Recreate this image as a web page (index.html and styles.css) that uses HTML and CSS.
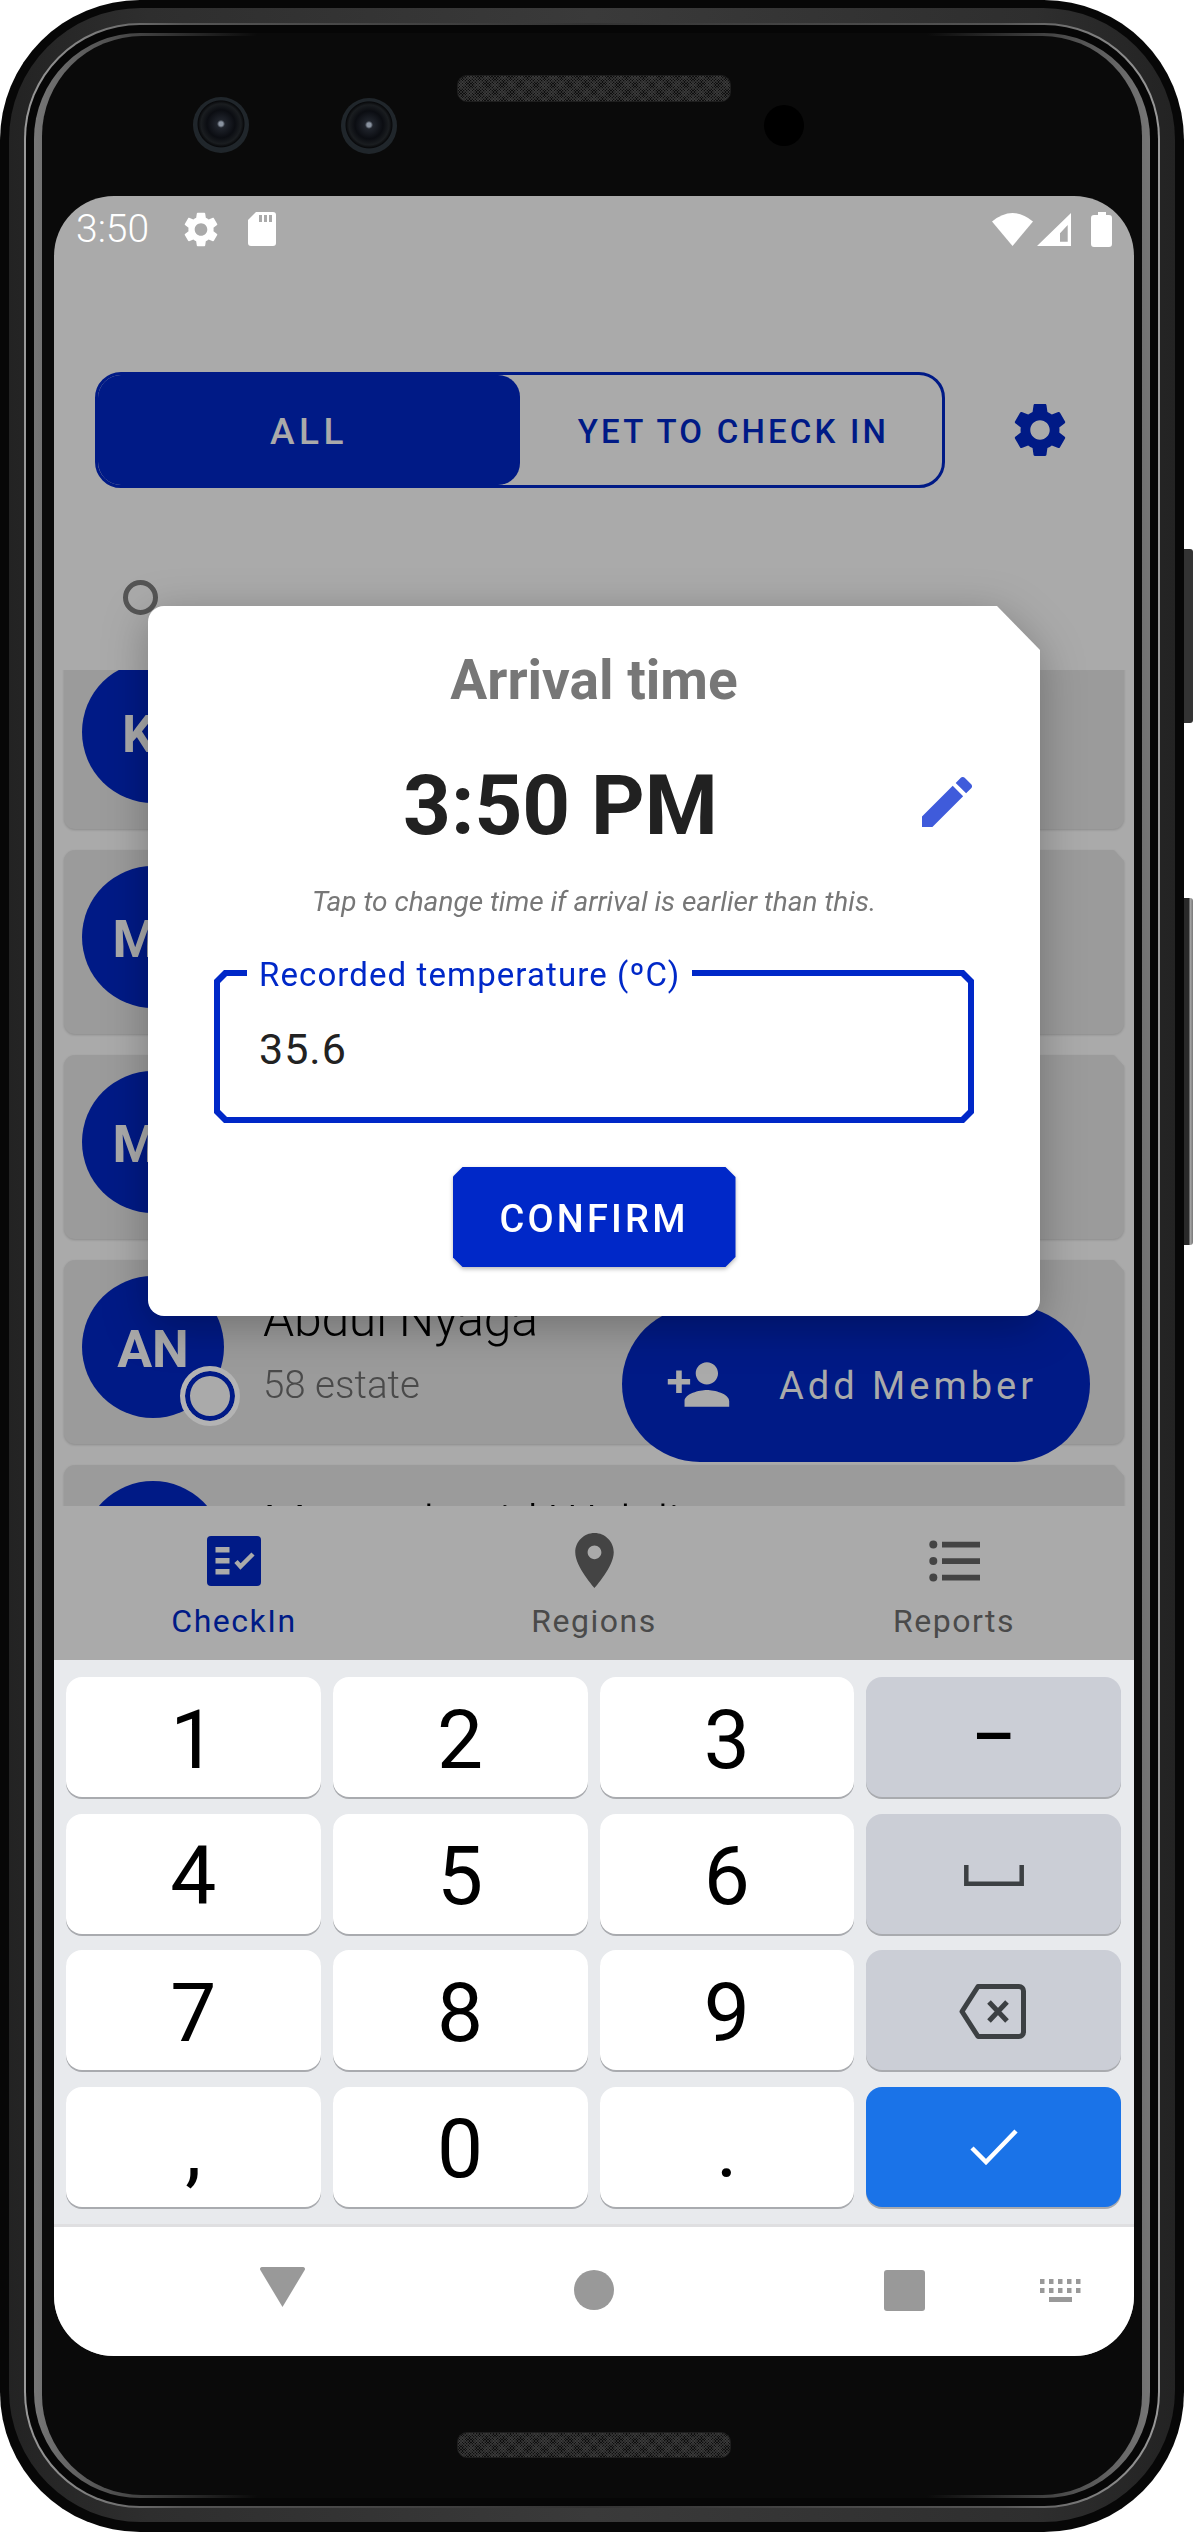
FILE: index.html
```html
<!DOCTYPE html>
<html lang="en">
<head>
<meta charset="utf-8">
<title>CheckIn</title>
<link rel="stylesheet" href="styles.css">
</head>
<body>
<div class="phone">
  <span class="side-key side-key-power"></span>
  <span class="side-key side-key-volume"></span>
  <div class="band">
    <div class="edge">
      <div class="gutter">
        <div class="ring">
          <div class="face">
            <div class="sensors">
              <span class="camera camera-a"></span>
              <span class="camera camera-b"></span>
              <span class="speaker speaker-top"></span>
              <span class="proximity"></span>
            </div>
            <div class="screen">
              <div class="status-bar">
                <span class="clock">3:50</span>
                <svg class="st-gear" viewBox="2.5 2 19 20"><path d="M19.14 12.94c.04-.3.06-.61.06-.94 0-.32-.02-.64-.07-.94l2.03-1.58c.18-.14.23-.41.12-.61l-1.92-3.32c-.12-.22-.37-.29-.59-.22l-2.39.96c-.5-.38-1.03-.7-1.62-.94l-.36-2.54c-.04-.24-.24-.41-.48-.41h-3.84c-.24 0-.43.17-.47.41l-.36 2.54c-.59.24-1.13.57-1.62.94l-2.39-.96c-.22-.08-.47 0-.59.22L2.74 8.87c-.12.21-.08.47.12.61l2.03 1.58c-.05.3-.09.63-.09.94s.02.64.07.94l-2.03 1.58c-.18.14-.23.41-.12.61l1.92 3.32c.12.22.37.29.59.22l2.39-.96c.5.38 1.03.7 1.62.94l.36 2.54c.05.24.24.41.48.41h3.84c.24 0 .44-.17.47-.41l.36-2.54c.59-.24 1.13-.56 1.62-.94l2.39.96c.22.08.47 0 .59-.22l1.92-3.32c.12-.22.07-.47-.12-.61l-2.01-1.58zM12 15.6c-1.98 0-3.6-1.62-3.6-3.6s1.62-3.6 3.6-3.6 3.6 1.62 3.6 3.6-1.62 3.6-3.6 3.6z"/></svg>
                <svg class="st-sd" viewBox="0 0 28 34"><path d="M8 0H25a3 3 0 0 1 3 3V31a3 3 0 0 1-3 3H3a3 3 0 0 1-3-3V8Z"/><path class="st-slot" d="M11 3h3v7h-3zM16 3h3v7h-3zM21 3h3v7h-3z"/></svg>
                <span class="status-spacer"></span>
                <svg class="st-wifi" viewBox="0 0 41 33"><path d="M20.5 33 0 8.5Q20.5-8.5 41 8.5Z"/></svg>
                <svg class="st-signal" viewBox="0 0 34 33"><path fill-rule="evenodd" d="M34 0 0 33H34ZM30.7 12 23 20.3V28.7H30.7Z"/></svg>
                <svg class="st-battery" viewBox="0 0 21 35"><path d="M7 0h8v3h3a3 3 0 0 1 3 3V32a3 3 0 0 1-3 3H3a3 3 0 0 1-3-3V6a3 3 0 0 1 3-3h4Z"/></svg>
              </div>

              <div class="filter-row">
                <div class="toggle">
                  <div class="toggle-on">ALL</div>
                  <div class="toggle-off">YET TO CHECK IN</div>
                </div>
                <svg class="filter-gear" viewBox="2.5 2 19 20"><path d="M19.14 12.94c.04-.3.06-.61.06-.94 0-.32-.02-.64-.07-.94l2.03-1.58c.18-.14.23-.41.12-.61l-1.92-3.32c-.12-.22-.37-.29-.59-.22l-2.39.96c-.5-.38-1.03-.7-1.62-.94l-.36-2.54c-.04-.24-.24-.41-.48-.41h-3.84c-.24 0-.43.17-.47.41l-.36 2.54c-.59.24-1.13.57-1.62.94l-2.39-.96c-.22-.08-.47 0-.59.22L2.74 8.87c-.12.21-.08.47.12.61l2.03 1.58c-.05.3-.09.63-.09.94s.02.64.07.94l-2.03 1.58c-.18.14-.23.41-.12.61l1.92 3.32c.12.22.37.29.59.22l2.39-.96c.5.38 1.03.7 1.62.94l.36 2.54c.05.24.24.41.48.41h3.84c.24 0 .44-.17.47-.41l.36-2.54c.59-.24 1.13-.56 1.62-.94l2.39.96c.22.08.47 0 .59-.22l1.92-3.32c.12-.22.07-.47-.12-.61l-2.01-1.58zM12 15.6c-1.98 0-3.6-1.62-3.6-3.6s1.62-3.6 3.6-3.6 3.6 1.62 3.6 3.6-1.62 3.6-3.6 3.6z"/></svg>
              </div>

              <span class="scroll-ring"></span>

              <div class="list">
                <div class="card card-first"><div class="card-body">
                  <div class="avatar">KJ</div>
                  <div class="person"><div class="person-name">Kamau Juma</div><div class="person-place">12 estate</div></div>
                </div></div>
                <div class="card"><div class="card-body">
                  <div class="avatar">MA</div>
                  <div class="person"><div class="person-name">Mary Achieng</div><div class="person-place">31 estate</div></div>
                </div></div>
                <div class="card"><div class="card-body">
                  <div class="avatar">MA</div>
                  <div class="person"><div class="person-name">Musa Ali</div><div class="person-place">44 estate</div></div>
                </div></div>
                <div class="card"><div class="card-body">
                  <div class="avatar">AN<span class="avatar-badge"></span></div>
                  <div class="person"><div class="person-name">Abdul Nyaga</div><div class="person-place">58 estate</div></div>
                </div></div>
                <div class="card"><div class="card-body">
                  <div class="avatar">MW</div>
                  <div class="person"><div class="person-name">Mwanakasid Walali</div><div class="person-place">60 estate</div></div>
                </div></div>
              </div>

              <div class="tabs">
                <div class="tab tab-active">
                  <span class="tab-icon">
                    <svg class="ic-check" viewBox="0 0 54 50"><rect width="54" height="50" rx="4" fill="#001a86"/><path fill="#aaa" d="M8.5 11h14v5.500h-14zM8.500 22h14v5.500h-14zM8.500 33h14v5.500h-14z"/><path fill="none" stroke="#aaa" stroke-width="4.500" d="M29 25.500l4.500 5L46 18"/></svg>
                  </span>
                  <span class="tab-label">CheckIn</span>
                </div>
                <div class="tab">
                  <span class="tab-icon">
                    <svg class="ic-place" viewBox="5 2 14 20"><path d="M12 2C8.130 2 5 5.130 5 9c0 5.250 7 13 7 13s7-7.750 7-13c0-3.870-3.130-7-7-7zm0 9.500c-1.380 0-2.500-1.120-2.500-2.500s1.120-2.500 2.500-2.500 2.500 1.120 2.500 2.500-1.120 2.500-2.500 2.500z"/></svg>
                  </span>
                  <span class="tab-label">Regions</span>
                </div>
                <div class="tab">
                  <span class="tab-icon">
                    <svg class="ic-list" viewBox="0 0 51 42"><circle cx="4.300" cy="4.500" r="4"/><circle cx="4.300" cy="21" r="4"/><circle cx="4.300" cy="37.500" r="4"/><path d="M13 1.700h38v5.700H13zM13 18.200h38v5.700H13zM13 34.700h38v5.700H13z"/></svg>
                  </span>
                  <span class="tab-label">Reports</span>
                </div>
              </div>

              <div class="keyboard">
                <div class="key">1</div>
                <div class="key">2</div>
                <div class="key">3</div>
                <div class="key key-fn"><span class="key-minus">&#8722;</span></div>
                <div class="key">4</div>
                <div class="key">5</div>
                <div class="key">6</div>
                <div class="key key-fn"><svg class="ic-space" viewBox="0 0 60 21"><path fill="none" stroke="#3c4043" stroke-width="4.500" d="M2.300 0V18.700H57.700V0"/></svg></div>
                <div class="key">7</div>
                <div class="key">8</div>
                <div class="key">9</div>
                <div class="key key-fn"><svg class="ic-back" viewBox="0 0 67 55"><path fill="none" stroke="#3c4043" stroke-width="5" stroke-linejoin="round" d="M19 2.500H60a4.500 4.500 0 0 1 4.500 4.500V48a4.500 4.500 0 0 1-4.500 4.500H19L3 27.500Z"/><path fill="none" stroke="#3c4043" stroke-width="5" d="M30 18 48 37M48 18 30 37"/></svg></div>
                <div class="key">,</div>
                <div class="key">0</div>
                <div class="key">.</div>
                <div class="key key-go"><svg class="ic-enter" viewBox="0 0 48 37"><path fill="none" stroke="#fff" stroke-width="4.500" d="M2 20 16 34 46 3"/></svg></div>
              </div>

              <div class="sys-nav">
                <svg class="sys-back" viewBox="0 0 45 40"><path d="M2 0H43a2 2 0 0 1 1.700 3L22.500 40 .3 3A2 2 0 0 1 2 0Z"/></svg>
                <span class="sys-home"></span>
                <span class="sys-recent"></span>
                <svg class="sys-kb" viewBox="0 0 41 23"><path d="M0 0h4.500v5H0zM9 0h4.500v5H9zM18 0h4.500v5H18zM27 0h4.500v5H27zM36 0h4.500v5H36zM0 9h4.500v5H0zM9 9h4.500v5H9zM18 9h4.500v5H18zM27 9h4.500v5H27zM36 9h4.500v5H36zM9 18h23v5H9z"/></svg>
              </div>

              <div class="fab">
                <svg class="ic-add" viewBox="0 0 24 24"><path d="M15 12c2.210 0 4-1.790 4-4s-1.790-4-4-4-4 1.790-4 4 1.790 4 4 4zm-9-2V7H4v3H1v2h3v3h2v-3h3v-2H6zm9 4c-2.670 0-8 1.340-8 4v2h16v-2c0-2.660-5.330-4-8-4z"/></svg>
                <span class="fab-label">Add Member</span>
              </div>

              <div class="dialog">
                <div class="dialog-body">
                  <div class="dialog-title">Arrival time</div>
                  <div class="time-row">
                    <span class="time-value">3:50 PM</span>
                    <svg class="ic-edit" viewBox="3 3 18 18"><path d="M3 17.250V21h3.750L17.810 9.940l-3.750-3.750L3 17.250zM20.710 7.040c.39-.39.39-1.020 0-1.410l-2.340-2.340c-.39-.39-1.020-.39-1.410 0l-1.830 1.830 3.750 3.750 1.830-1.830z"/></svg>
                  </div>
                  <div class="dialog-hint">Tap to change time if arrival is earlier than this.</div>
                  <div class="field">
                    <div class="field-border"><div class="field-inner">35.6</div></div>
                    <span class="field-label">Recorded temperature (ºC)</span>
                  </div>
                  <div class="confirm-wrap"><div class="confirm">CONFIRM</div></div>
                </div>
              </div>
            </div>
            <span class="speaker speaker-bottom"></span>
          </div>
        </div>
      </div>
    </div>
  </div>
</div>
</body>
</html>
```

FILE: styles.css
```css
* { box-sizing: border-box; }
html, body { margin: 0; padding: 0; background: #fff; }
body { width: 1194px; height: 2532px; overflow: hidden; font-family: Roboto, "Noto Sans", sans-serif; }

/* device shell */
.phone { position: relative; width: 1184px; height: 2532px; padding: 8px 9px 10px; border-radius: 140px; background: #070707; }
.side-key { position: absolute; left: 1184px; width: 9px; border-radius: 0 3px 3px 0; }
.side-key-power { top: 549px; height: 174px; background: #333; }
.side-key-volume { top: 898px; height: 347px; background: linear-gradient(90deg, #2a2a2a 0 5px, #aaa 6px, #777 100%); }
.band { height: 100%; padding: 15px 15px 14px; border-radius: 132px; background: linear-gradient(90deg, #232323, #2e2e2e 12%, #3a3a3a 50%, #2e2e2e 88%, #232323); }
.edge { height: 100%; padding: 2px; border-radius: 116px; background: linear-gradient(90deg, #9a9a9a, #555 14%, #333 50%, #555 86%, #9a9a9a); }
.gutter { height: 100%; padding: 8px; border-radius: 114px; background: #060606; }
.ring { height: 100%; padding: 3px 8px; border-radius: 106px; background: linear-gradient(90deg, #767676, #4a4a4a 8%, #0a0a0a 20%, #0a0a0a 80%, #4a4a4a 92%, #767676); }
.face { display: flex; flex-direction: column; height: 100%; border-radius: 100px; background: #0a0a0a; }

.sensors { display: flex; align-items: flex-start; flex: none; height: 160px; padding-left: 151px; }
.camera { flex: none; width: 56px; height: 56px; border-radius: 50%; background: radial-gradient(circle at 50% 48%, #8a93a0 0 2px, #20242c 4px, #0b0d12 14px, #1a1d20 20px, #08090b 23px, #20262b 24px 28px); }
.camera-a { margin-top: 61px; }
.camera-b { margin-top: 62px; margin-left: 92px; }
.speaker { flex: none; width: 274px; border: 1px solid #1e1e1e; border-radius: 10px; background: repeating-linear-gradient(45deg, rgba(70, 70, 70, .55) 0 1px, transparent 1px 2px), repeating-linear-gradient(-45deg, rgba(70, 70, 70, .55) 0 1px, transparent 1px 2px), #0e0e0e; }
.speaker-top { height: 27px; margin-top: 39px; margin-left: 60px; }
.speaker-bottom { height: 26px; margin-top: 76px; margin-left: 415px; }
.proximity { flex: none; width: 40px; height: 41px; margin-top: 69px; margin-left: 33px; border-radius: 50%; background: #000; }

/* screen */
.screen { position: relative; display: flex; flex-direction: column; flex: none; width: 1080px; height: 2160px; margin-left: 12px; overflow: hidden; border-radius: 60px; background: #aaa; }
.status-bar { display: flex; align-items: center; flex: none; height: 66px; padding: 0 22px 0 22px; color: #fff; fill: #fff; }
.clock { width: 74px; font-size: 39px; font-weight: 300; line-height: 68px; }
.st-gear { width: 34px; height: 35px; margin-left: 34px; }
.st-sd { width: 28px; height: 34px; margin-left: 30px; }
.st-slot { fill: #aaa; }
.status-spacer { flex: 1; }
.st-wifi { width: 41px; height: 33px; }
.st-signal { width: 34px; height: 33px; margin-left: 4px; }
.st-battery { width: 21px; height: 35px; margin-left: 20px; }

.filter-row { display: flex; align-items: center; flex: none; margin-top: 110px; padding-left: 41px; }
.toggle { display: flex; width: 850px; height: 116px; overflow: hidden; border: 3px solid #001a86; border-radius: 26px; }
.toggle-on { display: flex; align-items: center; justify-content: center; flex: none; width: 422px; padding-top: 3px; border-radius: 0 22px 22px 0; background: #001a86; color: #aaa; font-size: 37px; font-weight: 500; letter-spacing: 4.500px; }
.toggle-off { display: flex; align-items: center; justify-content: center; flex: 1; padding: 2px 0 0 5px; color: #001a86; font-size: 33px; font-weight: 500; letter-spacing: 3.200px; }
.filter-gear { width: 52px; height: 54px; margin-left: 69px; fill: #001a86; }

.scroll-ring { flex: none; width: 35px; height: 35px; margin: 92px 0 0 69px; border: 5px solid #555; border-radius: 50%; }

/* list */
.list { display: flex; flex-direction: column; flex: 1; gap: 21px; min-height: 0; margin-top: 55px; padding: 0 10px; overflow: hidden; }
.card { flex: none; height: 184px; filter: drop-shadow(0 1px 1px rgba(0, 0, 0, .18)); }
.card-first { margin-top: -25px; }
.card-body { display: flex; height: 100%; padding: 16px 18px; border-radius: 11px; background: #9b9b9b; clip-path: polygon(0 0, calc(100% - 10px) 0, 100% 11px, 100% 100%, 0 100%); }
.avatar { position: relative; display: flex; align-items: center; justify-content: center; flex: none; width: 142px; height: 142px; padding-top: 4px; border-radius: 50%; background: #001a86; color: #aaa; font-size: 52px; font-weight: 700; }
.avatar-badge { position: absolute; left: 98px; top: 90px; width: 60px; height: 60px; border: 5px solid #b3b3b3; border-radius: 50%; background: #aaa; box-shadow: inset 0 0 0 5px #001a86; }
.person { margin-left: 39px; padding-top: 15px; }
.person-name { color: #000; font-size: 50px; font-weight: 300; line-height: 56px; letter-spacing: -.3px; white-space: nowrap; }
.person-place { margin-top: 16px; color: #4a4a4a; font-size: 38.500px; font-weight: 300; line-height: 44px; }

.fab { position: absolute; left: 568px; top: 1110px; display: flex; align-items: center; width: 468px; height: 156px; padding-left: 43px; border-radius: 78px; background: #001a86; color: #aaa; fill: #aaa; }
.ic-add { width: 67px; height: 67px; }
.fab-label { margin: 3px 0 0 47px; font-size: 38px; letter-spacing: 4px; }

/* dialog */
.dialog { position: absolute; left: 94px; top: 410px; width: 892px; height: 710px; filter: drop-shadow(0 10px 22px rgba(0, 0, 0, .28)); }
.dialog-body { display: flex; flex-direction: column; align-items: center; height: 100%; padding-top: 42px; border-radius: 16px; background: #fff; clip-path: polygon(0 0, calc(100% - 43px) 0, 100% 44px, 100% 100%, 0 100%); }
.dialog-title { color: #777; font-size: 55px; font-weight: 700; line-height: 64px; }
.time-row { display: flex; align-items: center; width: 100%; margin-top: 47px; padding-left: 255px; }
.time-value { color: #212121; font-size: 83.500px; font-weight: 700; line-height: 94px; }
.ic-edit { width: 50px; height: 50px; margin: -9px 0 0 204px; fill: #3f5bdb; }
.dialog-hint { margin-top: 32px; color: #777; font-size: 28px; font-style: italic; font-weight: 400; line-height: 34px; }
.field { position: relative; flex: none; width: 760px; height: 153px; margin-top: 51px; }
.field-border { height: 100%; padding: 6px; background: #0028c8; clip-path: polygon(10px 0, calc(100% - 10px) 0, 100% 10px, 100% calc(100% - 10px), calc(100% - 10px) 100%, 10px 100%, 0 calc(100% - 10px), 0 10px); }
.field-inner { height: 100%; padding: 49px 0 0 39px; background: #fff; color: #222; font-size: 43px; line-height: 49px; letter-spacing: 1px; clip-path: polygon(7px 0, calc(100% - 7px) 0, 100% 7px, 100% calc(100% - 7px), calc(100% - 7px) 100%, 7px 100%, 0 calc(100% - 7px), 0 7px); }
.field-label { position: absolute; left: 33px; top: -14px; padding: 0 12px; background: #fff; color: #0028c8; font-size: 33px; line-height: 38px; letter-spacing: 1.100px; }
.confirm-wrap { flex: none; margin-top: 44px; filter: drop-shadow(0 2px 2px rgba(0, 0, 0, .28)); }
.confirm { display: flex; align-items: center; justify-content: center; width: 283px; height: 100px; padding-top: 3px; background: #0028c8; color: #fff; font-size: 38px; font-weight: 500; letter-spacing: 3.200px; clip-path: polygon(10px 0, calc(100% - 10px) 0, 100% 10px, 100% calc(100% - 10px), calc(100% - 10px) 100%, 10px 100%, 0 calc(100% - 10px), 0 10px); }

/* bottom tabs */
.tabs { display: grid; grid-template-columns: repeat(3, 1fr); flex: none; height: 154px; padding-top: 27px; background: #aaa; }
.tab { display: flex; flex-direction: column; align-items: center; color: #4a4a4a; fill: #444; }
.tab-active { color: #001a86; }
.tab-icon { display: flex; align-items: center; justify-content: center; height: 55px; }
.ic-check { width: 54px; height: 50px; }
.ic-place { width: 39px; height: 55px; }
.ic-list { width: 51px; height: 42px; }
.tab-label { margin-top: 14px; font-size: 32px; line-height: 38px; letter-spacing: 1.5px; }

/* keyboard */
.keyboard { display: grid; grid-template-columns: repeat(4, 1fr); grid-auto-rows: 120px; flex: none; gap: 16.670px 12px; height: 567px; padding: 17px 13px 0 12px; border-bottom: 3px solid #dfdfe1; background: #e8eaed; }
.key { display: flex; align-items: center; justify-content: center; padding-top: 5px; border-radius: 16px; background: #fff; box-shadow: 0 2px 0 #a9abaf; color: #000; font-size: 82px; line-height: 1; }
.key-fn { padding-top: 0; background: #cbced6; }
.key-go { padding-top: 0; background: #1a73e8; }
.key-minus { font-size: 82px; font-weight: 400; }
.ic-space { width: 60px; height: 21px; margin-top: 4px; }
.ic-back { width: 67px; height: 55px; margin: 3px 2px 0 0; }
.ic-enter { width: 48px; height: 37px; margin-top: 0; }

.sys-nav { display: flex; align-items: flex-start; flex: none; height: 129px; padding: 40px 0 0 206px; background: #fff; fill: #999; }
.sys-back { flex: none; width: 45px; height: 40px; }
.sys-home { flex: none; width: 40px; height: 40px; margin: 3px 0 0 269px; border-radius: 50%; background: #999; }
.sys-recent { flex: none; width: 41px; height: 41px; margin: 3px 0 0 270px; border-radius: 3px; background: #999; }
.sys-kb { flex: none; width: 41px; height: 23px; margin: 12px 0 0 115px; }
```
